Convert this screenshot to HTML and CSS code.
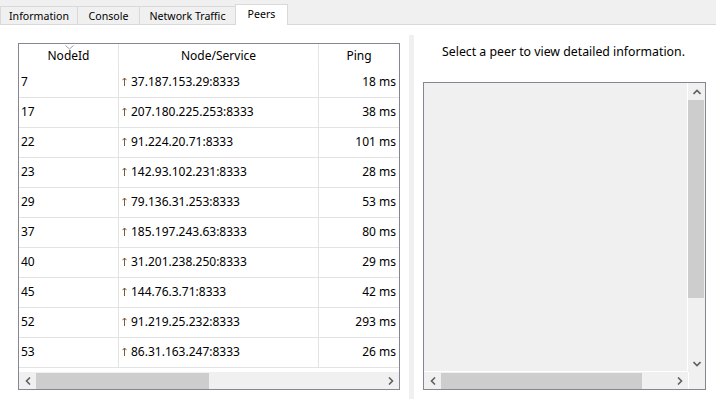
FILE: index.html
```html
<!DOCTYPE html>
<html>
<head>
<meta charset="utf-8">
<link rel="stylesheet" href="styles.css">
</head>
<body>
<div class="tabbar">
  <div class="tab t1">Information</div>
  <div class="tab t2">Console</div>
  <div class="tab t3">Network Traffic</div>
  <div class="tab t4 active">Peers</div>
</div>
<div class="content">
  <div class="left">
    <div class="table">
      <div class="thead">
        <div class="th sorted">NodeId<svg class="sort" width="9" height="5" viewBox="0 0 9 5"><polyline points="0.5,0.5 4.5,4 8.5,0.5" fill="none" stroke="#a0a0a0" stroke-width="1"/></svg></div>
        <div class="th">Node/Service</div>
        <div class="th last">Ping</div>
      </div>
      <div class="rows">
        <div class="row"><div class="td">7</div><div class="td addr"><svg class="up" width="5" height="9" viewBox="0 0 5 9"><path d="M2.5 1V9M0.5 3.2L2.5 1L4.5 3.2" fill="none" stroke="#7b5a3c" stroke-width="1"/></svg>37.187.153.29:8333</div><div class="td ping">18 ms</div></div>
        <div class="row"><div class="td">17</div><div class="td addr"><svg class="up" width="5" height="9" viewBox="0 0 5 9"><path d="M2.5 1V9M0.5 3.2L2.5 1L4.5 3.2" fill="none" stroke="#7b5a3c" stroke-width="1"/></svg>207.180.225.253:8333</div><div class="td ping">38 ms</div></div>
        <div class="row"><div class="td">22</div><div class="td addr"><svg class="up" width="5" height="9" viewBox="0 0 5 9"><path d="M2.5 1V9M0.5 3.2L2.5 1L4.5 3.2" fill="none" stroke="#7b5a3c" stroke-width="1"/></svg>91.224.20.71:8333</div><div class="td ping">101 ms</div></div>
        <div class="row"><div class="td">23</div><div class="td addr"><svg class="up" width="5" height="9" viewBox="0 0 5 9"><path d="M2.5 1V9M0.5 3.2L2.5 1L4.5 3.2" fill="none" stroke="#7b5a3c" stroke-width="1"/></svg>142.93.102.231:8333</div><div class="td ping">28 ms</div></div>
        <div class="row"><div class="td">29</div><div class="td addr"><svg class="up" width="5" height="9" viewBox="0 0 5 9"><path d="M2.5 1V9M0.5 3.2L2.5 1L4.5 3.2" fill="none" stroke="#7b5a3c" stroke-width="1"/></svg>79.136.31.253:8333</div><div class="td ping">53 ms</div></div>
        <div class="row"><div class="td">37</div><div class="td addr"><svg class="up" width="5" height="9" viewBox="0 0 5 9"><path d="M2.5 1V9M0.5 3.2L2.5 1L4.5 3.2" fill="none" stroke="#7b5a3c" stroke-width="1"/></svg>185.197.243.63:8333</div><div class="td ping">80 ms</div></div>
        <div class="row"><div class="td">40</div><div class="td addr"><svg class="up" width="5" height="9" viewBox="0 0 5 9"><path d="M2.5 1V9M0.5 3.2L2.5 1L4.5 3.2" fill="none" stroke="#7b5a3c" stroke-width="1"/></svg>31.201.238.250:8333</div><div class="td ping">29 ms</div></div>
        <div class="row"><div class="td">45</div><div class="td addr"><svg class="up" width="5" height="9" viewBox="0 0 5 9"><path d="M2.5 1V9M0.5 3.2L2.5 1L4.5 3.2" fill="none" stroke="#7b5a3c" stroke-width="1"/></svg>144.76.3.71:8333</div><div class="td ping">42 ms</div></div>
        <div class="row"><div class="td">52</div><div class="td addr"><svg class="up" width="5" height="9" viewBox="0 0 5 9"><path d="M2.5 1V9M0.5 3.2L2.5 1L4.5 3.2" fill="none" stroke="#7b5a3c" stroke-width="1"/></svg>91.219.25.232:8333</div><div class="td ping">293 ms</div></div>
        <div class="row"><div class="td">53</div><div class="td addr"><svg class="up" width="5" height="9" viewBox="0 0 5 9"><path d="M2.5 1V9M0.5 3.2L2.5 1L4.5 3.2" fill="none" stroke="#7b5a3c" stroke-width="1"/></svg>86.31.163.247:8333</div><div class="td ping">26 ms</div></div>
      </div>
      <div class="hscroll">
        <div class="btn"><svg width="6" height="8" viewBox="0 0 6 8"><polyline points="5,0.5 1.5,4 5,7.5" fill="none" stroke="#606060" stroke-width="1.6"/></svg></div>
        <div class="thumb lthumb"></div>
        <div class="track"></div>
        <div class="btn"><svg width="6" height="8" viewBox="0 0 6 8"><polyline points="1,0.5 4.5,4 1,7.5" fill="none" stroke="#606060" stroke-width="1.6"/></svg></div>
      </div>
    </div>
  </div>
  <div class="splitter"></div>
  <div class="right">
    <div class="title">Select a peer to view detailed information.</div>
    <div class="box">
      <div class="boxarea"></div>
      <div class="vscroll">
        <div class="btn"><svg width="8" height="6" viewBox="0 0 8 6"><polyline points="0.5,5 4,1.5 7.5,5" fill="none" stroke="#606060" stroke-width="1.6"/></svg></div>
        <div class="vthumb"></div>
        <div class="vtrack"></div>
        <div class="btn"><svg width="8" height="6" viewBox="0 0 8 6"><polyline points="0.5,1 4,4.5 7.5,1" fill="none" stroke="#606060" stroke-width="1.6"/></svg></div>
      </div>
      <div class="hscroll boxh">
        <div class="btn"><svg width="6" height="8" viewBox="0 0 6 8"><polyline points="5,0.5 1.5,4 5,7.5" fill="none" stroke="#606060" stroke-width="1.6"/></svg></div>
        <div class="thumb rthumb"></div>
        <div class="track"></div>
        <div class="btn"><svg width="6" height="8" viewBox="0 0 6 8"><polyline points="1,0.5 4.5,4 1,7.5" fill="none" stroke="#606060" stroke-width="1.6"/></svg></div>
      </div>
      <div class="corner"></div>
    </div>
  </div>
</div>
</body>
</html>
```
FILE: styles.css
```css
html, body {
  margin: 0;
  padding: 0;
}
body {
  width: 716px;
  height: 406px;
  overflow: hidden;
  background: #ffffff;
  font-family: "Noto Sans", "Open Sans", "DejaVu Sans", sans-serif;
  font-size: 12px;
  color: #000000;
}
.tabbar {
  height: 24px;
  background: #f0f0f0;
  border-bottom: 1px solid #d9d9d9;
  display: flex;
  align-items: flex-end;
}
.tab {
  box-sizing: border-box;
  height: 18px;
  background: #f0f0f0;
  border: 1px solid #d9d9d9;
  border-bottom: none;
  border-left: none;
  display: flex;
  align-items: center;
  justify-content: center;
  line-height: 16px;
  font-size: 10.6px;
  padding-top: 1px;
}
.t1 { width: 78px; border-left: 1px solid #d9d9d9; }
.t2 { width: 62px; }
.t3 { width: 96px; }
.t4 { width: 53px; }
.tab.active {
  height: 21px;
  margin-bottom: -1px;
  background: #ffffff;
  border-left: 1px solid #d9d9d9;
  margin-left: -1px;
  padding-top: 0;
  padding-bottom: 2px;
}
.content {
  display: flex;
  padding: 10px 0 7px 0;
  height: 381px;
  box-sizing: border-box;
}
.left {
  width: 409px;
  box-sizing: border-box;
  padding: 8px 9px 0 18px;
}
.table {
  box-sizing: border-box;
  height: 347px;
  border: 1px solid #828790;
  display: flex;
  flex-direction: column;
  background: #ffffff;
}
.thead {
  display: grid;
  grid-template-columns: 100px 200px 80px;
  height: 24px;
}
.th {
  position: relative;
  text-align: center;
  line-height: 23px;
  border-right: 1px solid #e5e5e5;
}
.th.last { border-right: none; }
.sort {
  position: absolute;
  top: 1px;
  left: 46px;
}
.rows {
  flex: 1;
}
.row {
  display: grid;
  grid-template-columns: 100px 200px 80px;
  height: 30px;
  box-sizing: border-box;
  border-bottom: 1px solid #e3e3e3;
}
.td {
  display: flex;
  align-items: center;
  padding-left: 2px;
  padding-bottom: 2px;
  border-right: 1px solid #e3e3e3;
  white-space: nowrap;
}
.td.addr {
  padding-left: 3px;
}
.up {
  margin-right: 4px;
}
.td.ping {
  border-right: none;
  justify-content: flex-end;
  padding-right: 3px;
  padding-left: 0;
}
.hscroll {
  display: flex;
  height: 17px;
  background: #f0f0f0;
  flex: none;
}
.btn {
  width: 17px;
  height: 17px;
  display: flex;
  align-items: center;
  justify-content: center;
  flex: none;
}
.thumb {
  background: #cdcdcd;
  height: 16px;
  margin-top: 1px;
  flex: none;
}
.lthumb { width: 173px; }
.rthumb { width: 201px; }
.track { flex: 1; }
.splitter {
  width: 5px;
  background: #f0f0f0;
  flex: none;
}
.right {
  flex: 1;
  box-sizing: border-box;
  padding: 9px 10px 0 9px;
  display: flex;
  flex-direction: column;
}
.title {
  text-align: center;
  line-height: 16px;
  height: 16px;
  font-size: 12.3px;
  padding-right: 2px;
}
.box {
  margin-top: 22px;
  height: 308px;
  box-sizing: border-box;
  border: 1px solid #828790;
  background: #f0f0f0;
  display: grid;
  grid-template-columns: 1fr 17px;
  grid-template-rows: 1fr 17px;
}
.boxarea {
  border-right: 1px solid #ffffff;
  border-bottom: 1px solid #ffffff;
}
.vscroll {
  display: flex;
  flex-direction: column;
  background: #f0f0f0;
}
.vthumb {
  height: 198px;
  width: 16px;
  background: #cdcdcd;
  flex: none;
}
.vtrack { flex: 1; }
.corner {
  background: #f0f0f0;
  border-left: 1px solid #ffffff;
}
```
